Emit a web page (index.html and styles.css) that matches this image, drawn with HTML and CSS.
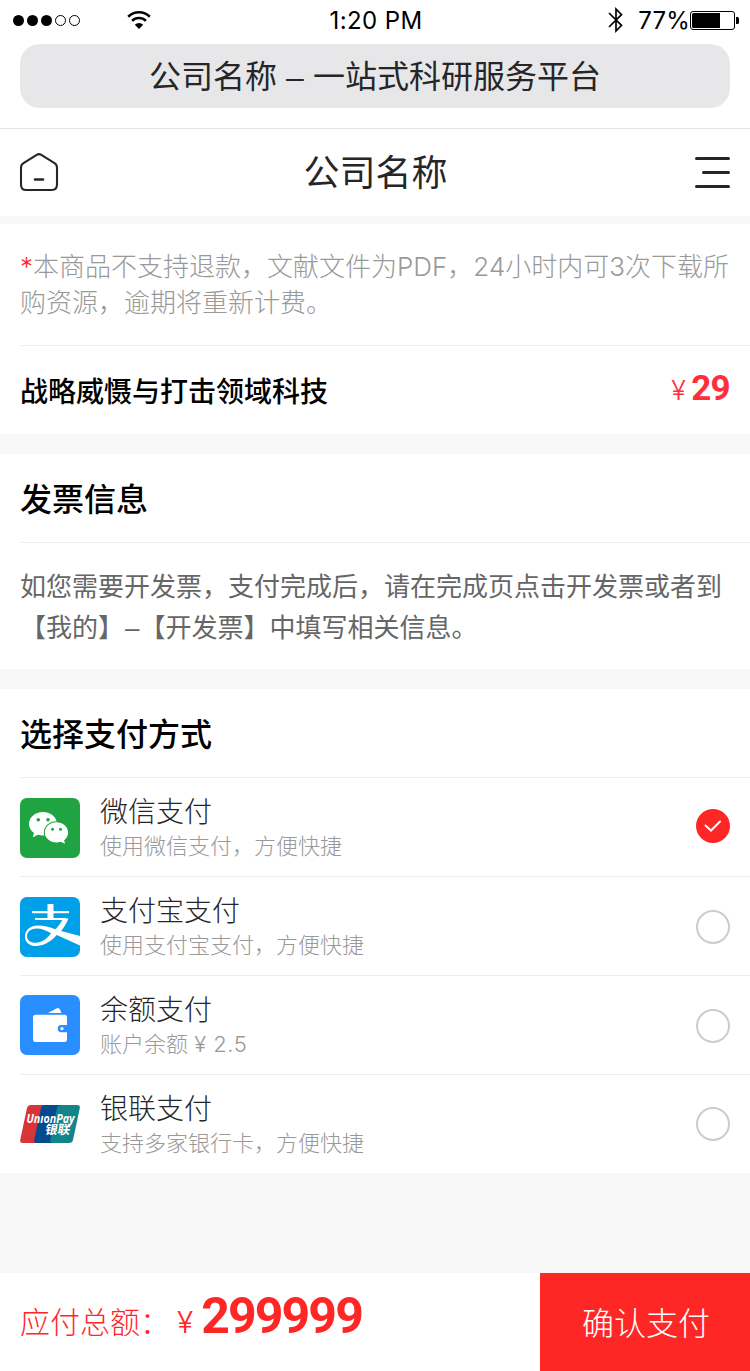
FILE: index.html
```
<!DOCTYPE html>
<html lang="zh-CN">
<head>
  <meta charset="UTF-8">
  <title>确认支付</title>
  <meta name="viewport" content="width=device-width, initial-scale=1.0">
  <link rel="stylesheet" href="styles.css">
</head>
<body>
  <div class="page">
    <div class="status-bar">
      <div class="status-left">
        <svg class="signal" width="68" height="12" viewBox="0 0 68 12">
          <circle cx="5.5" cy="6.5" r="5.5"/>
          <circle cx="19.5" cy="6.5" r="5.5"/>
          <circle cx="33.5" cy="6.5" r="5.5"/>
          <circle cx="47.5" cy="6.5" r="5" fill="none" stroke="#000"/>
          <circle cx="61.5" cy="6.5" r="5" fill="none" stroke="#000"/>
        </svg>
        <svg class="wifi" width="24" height="18" viewBox="0 0 24 18">
          <path d="M1.2 5.7a15.5 15.5 0 0 1 21.6 0M5.1 9.9a9.8 9.8 0 0 1 13.8 0" fill="none" stroke="#000" stroke-width="2.6"/>
          <path d="M12 18l-4.2-4.3a6 6 0 0 1 8.4 0z"/>
        </svg>
      </div>
      <div class="time">1:20 PM</div>
      <div class="status-right">
        <svg class="bluetooth" width="16" height="26" viewBox="0 0 16 26">
          <path d="M1 6l12.5 12.3L8 24V2l5.5 5.7L1 20" fill="none" stroke="#000" stroke-width="1.7"/>
        </svg>
        <span class="percent">77%</span>
        <svg class="battery" width="49" height="19" viewBox="0 0 49 19">
          <rect x=".5" y=".5" width="44" height="18" rx="2.5" fill="none" stroke="#000"/>
          <path d="M3.5 2H30v15H3.5Q2 17 2 15.5v-12Q2 2 3.5 2zM46 6h1.5q1.5 0 1.5 1.5v4q0 1.5-1.5 1.5H46z"/>
        </svg>
      </div>
    </div>

    <div class="address-bar">
      <div class="address">公司名称 <span class="dash">–</span> 一站式科研服务平台</div>
    </div>

    <header class="header">
      <svg width="38" height="38" viewBox="0 0 38 38" fill="none" stroke="#262628" stroke-width="2.1" stroke-linecap="round">
        <path d="M16.7 1.8q2.3-1.4 4.6 0l13.2 8.4q2.5 1.6 2.5 4.6v17q0 5.2-5.2 5.2H6.2Q1 37 1 31.8v-17q0-3 2.5-4.6z"/>
        <path d="M15 26.5h8" stroke-width="2.6"/>
      </svg>
      <h1>公司名称</h1>
      <svg width="38" height="32" viewBox="0 0 38 32" fill="none" stroke="#262628" stroke-width="3" stroke-linecap="round">
        <path d="M3.500 2.500h32M10.500 16.500h25M3.500 30.500h32"/>
      </svg>
    </header>

    <section class="card">
      <p class="notice"><span class="star">*</span>本商品不支持退款，文献文件为PDF，24小时内可3次下载所<br>购资源，逾期将重新计费。</p>
      <div class="goods">
        <span class="goods-name">战略威慑与打击领域科技</span>
        <span class="price"><span class="yen">¥</span>29</span>
      </div>
    </section>

    <section class="card">
      <h2>发票信息</h2>
      <p class="invoice">如您需要开发票，支付完成后，请在完成页点击开发票或者到<br>【我的】<span class="dash">–</span>【开发票】中填写相关信息。</p>
    </section>

    <section class="card">
      <h2>选择支付方式</h2>
      <ul class="pay-list">
        <li class="wechat">
          <svg class="logo" width="60" height="60" viewBox="0 0 60 60">
            <rect width="60" height="60" rx="7" fill="#20a443"/>
            <path d="M23 14c-7.800 0-14 5.300-14 11.900 0 3.700 1.900 6.900 5 9.100l-1.100 4.300 5-2.500c1.600.5 3.300.8 5.100.8 7.800 0 14-5.200 14-11.700S30.800 14 23 14z" fill="#fff"/>
            <ellipse cx="36.500" cy="34.500" rx="12.700" ry="11.300" fill="#20a443"/>
            <path d="M36.500 24.200c6.400 0 11.600 4.600 11.600 10.300 0 3.200-1.600 5.900-4 7.800l.9 3.500-4.300-2.100c-1.300.4-2.700.8-4.200.8-6.500 0-11.700-4.500-11.700-10s5.200-10.300 11.700-10.300z" fill="#fff"/>
            <g fill="#20a443"><circle cx="18.300" cy="21.700" r="1.800"/><circle cx="28" cy="21.700" r="1.800"/><circle cx="32.500" cy="31.300" r="1.500"/><circle cx="40.500" cy="31.300" r="1.500"/></g>
          </svg>
          <div class="pay-text">
            <div class="pay-name">微信支付</div>
            <div class="pay-desc">使用微信支付，方便快捷</div>
          </div>
          <span class="radio checked">
            <svg width="18" height="12" viewBox="0 0 18 12"><path d="M1.500 5.500L7 10.500l9-9" fill="none" stroke="#fff" stroke-width="2" stroke-linecap="round"/></svg>
          </span>
        </li>
        <li class="alipay">
          <svg class="logo" width="60" height="60" viewBox="0 0 60 60">
            <rect width="60" height="60" rx="7" fill="#00a0e9"/>
            <path d="M12 14h37v2.200H12zM15 21h31v2H15zM27.500 7h6v15h-6z" fill="#fff"/>
            <path d="M43 21.500h5.500c-2 5-4.500 9-7.400 12.500L60 39v9.500L36.700 38C30 45.500 23 49 16 49 9.500 49 5 45.400 5 39.700 5 33 10.500 28.500 18 28.500c6 0 11.500 1.700 17.600 3.700 3-3.200 5.400-6.700 7.400-10.700zM31 36.300c-5.500-3-9.500-4.800-14-4.800-6 0-10 3-10 7.800 0 4 3.500 6.500 8.500 6.500 6 0 11-3.500 15.500-9.500z" fill="#fff"/>
          </svg>
          <div class="pay-text">
            <div class="pay-name">支付宝支付</div>
            <div class="pay-desc">使用支付宝支付，方便快捷</div>
          </div>
          <span class="radio"></span>
        </li>
        <li class="balance">
          <svg class="logo" width="60" height="60" viewBox="0 0 60 60">
            <rect width="60" height="60" rx="7" fill="#298eff"/>
            <path d="M28 18l8.500-4.600q2-1 3.200.8L41.500 18z" fill="#fff"/>
            <path d="M15.500 19.800h29q2.500 0 2.500 2.500V30h-5.700a3.600 3.600 0 0 0 0 7.200H47v7.500q0 2.300-2.500 2.300h-29q-2.500 0-2.500-2.300V22.300q0-2.500 2.500-2.500z" fill="#fff"/>
            <circle cx="42" cy="33.600" r="1.600" fill="#fff"/>
          </svg>
          <div class="pay-text">
            <div class="pay-name">余额支付</div>
            <div class="pay-desc">账户余额 <span class="sum">¥ 2.5</span></div>
          </div>
          <span class="radio"></span>
        </li>
        <li>
          <svg class="logo" width="60" height="60" viewBox="0 0 60 60">
            <path d="M11 11h14l-8 38H3q-3.500 0-2.700-3.500L7 14q.8-3 4-3z" fill="#d73538"/>
            <path d="M25 11h16l-8 38H17q-3.500 0-2.700-3.500L21 14q.8-3 4-3z" fill="#044a8e"/>
            <path d="M41 11h16q3.500 0 2.800 3.200L53 46q-.7 3-4 3H33q-3.500 0-2.700-3.500L37 14q.8-3 4-3z" fill="#12858a"/>
            <text class="union-en" x="6.500" y="28.500" textLength="48" lengthAdjust="spacingAndGlyphs">UnıonPay</text>
            <text class="union-cn" transform="translate(24.500 39.500) skewX(-10)">银联</text>
          </svg>
          <div class="pay-text">
            <div class="pay-name">银联支付</div>
            <div class="pay-desc">支持多家银行卡，方便快捷</div>
          </div>
          <span class="radio"></span>
        </li>
      </ul>
    </section>

    <footer class="footer">
      <div class="total">应付总额：<span class="yen">¥</span><span class="amount">299999</span></div>
      <button class="submit">确认支付</button>
    </footer>
  </div>
</body>
</html>
```
FILE: styles.css
```
* {
  box-sizing: border-box;
}

body {
  margin: 0;
  background: #f8f8f8;
  color: #262628;
  font-family: "Noto Sans CJK SC", sans-serif;
}

h1, h2, p, ul {
  margin: 0;
  padding: 0;
}

svg {
  display: block;
  flex: none;
  overflow: visible;
}

.page {
  width: 750px;
  height: 1371px;
  display: flex;
  flex-direction: column;
  overflow: hidden;
}

/* status bar */
.status-bar {
  height: 44px;
  padding: 0 11px 4px 13px;
  display: grid;
  grid-template-columns: 1fr auto 1fr;
  align-items: center;
  background: #fff;
  color: #000;
  font-family: Inter, sans-serif;
  font-size: 24px;
}

.time {
  letter-spacing: 0.4px;
}

.status-left, .status-right {
  display: flex;
  align-items: center;
}

.wifi {
  margin-left: 46px;
}

.status-right {
  justify-content: flex-end;
}

.bluetooth {
  margin-right: 14px;
}

.percent {
  letter-spacing: 0.2px;
}

/* address bar */
.address-bar {
  padding: 0 20px 20px;
  background: #fff;
}

.address {
  height: 64px;
  line-height: 60px;
  border-radius: 20px;
  background: #e7e7e9;
  text-align: center;
  font-size: 32px;
  word-spacing: 2px;
}

.dash {
  font-family: "Liberation Sans", sans-serif;
}

.header {
  height: 88px;
  padding: 0 19px 1px 20px;
  display: flex;
  justify-content: space-between;
  align-items: center;
  background: #fff;
  border-top: 1px solid #e2e2e2;
  margin-bottom: 8px;
}

.header h1 {
  padding-bottom: 4px;
  font-size: 36px;
  font-weight: 400;
  line-height: 80px;
}

/* cards */
.card {
  background: #fff;
  margin-bottom: 20px;
}

.notice {
  height: 122px;
  margin-left: 20px;
  padding-top: 25px;
  border-bottom: 1px solid #ececec;
  color: #999;
  font-family: Inter, "Noto Sans CJK SC", sans-serif;
  font-size: 26px;
  font-weight: 300;
  line-height: 36px;
  white-space: nowrap;
}

.star {
  color: #ff2626;
}

.goods {
  height: 88px;
  padding: 0 20px;
  display: flex;
  justify-content: space-between;
  align-items: center;
}

.goods-name {
  color: #000;
  font-size: 28px;
  font-weight: 500;
}

.price {
  padding-bottom: 3px;
  color: #ff2f3a;
  font-family: Roboto, sans-serif;
  font-size: 35px;
  font-weight: 700;
  letter-spacing: -0.7px;
}

.yen {
  font-family: Inter, sans-serif;
  font-weight: 300;
}

.price .yen {
  font-size: 27px;
  margin-right: 6px;
}

h2 {
  height: 89px;
  margin-left: 20px;
  border-bottom: 1px solid #ececec;
  color: #000;
  font-size: 32px;
  font-weight: 500;
  line-height: 86px;
}

.invoice {
  height: 126px;
  padding: 21px 0 0 20px;
  color: #666;
  font-size: 26px;
  line-height: 41px;
  white-space: nowrap;
}

.invoice .dash {
  margin-left: 1px;
}

/* payment methods */
.pay-list {
  list-style: none;
  margin-left: 20px;
}

.pay-list li {
  height: 99px;
  padding-right: 20px;
  display: flex;
  align-items: center;
  border-bottom: 1px solid #ececec;
}

.pay-list li:last-child {
  height: 98px;
  border-bottom: 0;
}

.logo {
  margin-right: 20px;
}

.wechat .logo, .alipay .logo {
  margin-top: 2px;
}

.pay-text {
  flex: 1;
  padding-top: 2px;
  font-weight: 300;
}

.pay-name {
  font-size: 28px;
  line-height: 35px;
}

.pay-desc {
  color: #999;
  font-family: Inter, "Noto Sans CJK SC", sans-serif;
  font-size: 22px;
  line-height: 36px;
}

.sum {
  letter-spacing: 0.5px;
}

.radio {
  width: 34px;
  height: 34px;
  display: flex;
  align-items: center;
  justify-content: center;
  border: 2px solid #ccc;
  border-radius: 50%;
}

.alipay .radio, .balance .radio {
  margin-top: 2px;
}

.checked {
  border: 0;
  background: #ff2626;
  margin-bottom: 2px;
}

.union-en {
  fill: #fff;
  font: italic 700 12px "Open Sans", sans-serif;
}

.union-cn {
  fill: #fff;
  font-size: 12.5px;
  font-weight: 700;
}

/* bottom bar */
.footer {
  height: 98px;
  margin-top: auto;
  display: flex;
  background: #fff;
}

.total {
  flex: 1;
  padding-left: 20px;
  color: #ff2626;
  font-size: 30px;
  font-weight: 300;
  line-height: 87px;
  white-space: nowrap;
}

.total .yen {
  margin: 0 8px 0 7px;
}

.amount {
  font-family: Roboto, sans-serif;
  font-size: 50px;
  font-weight: 700;
  letter-spacing: -1.9px;
}

.submit {
  width: 210px;
  border: 0;
  padding: 0 0 3px 2px;
  background: #ff2626;
  color: #fff;
  font-family: "Noto Sans CJK SC", sans-serif;
  font-size: 32px;
  font-weight: 300;
}
```
